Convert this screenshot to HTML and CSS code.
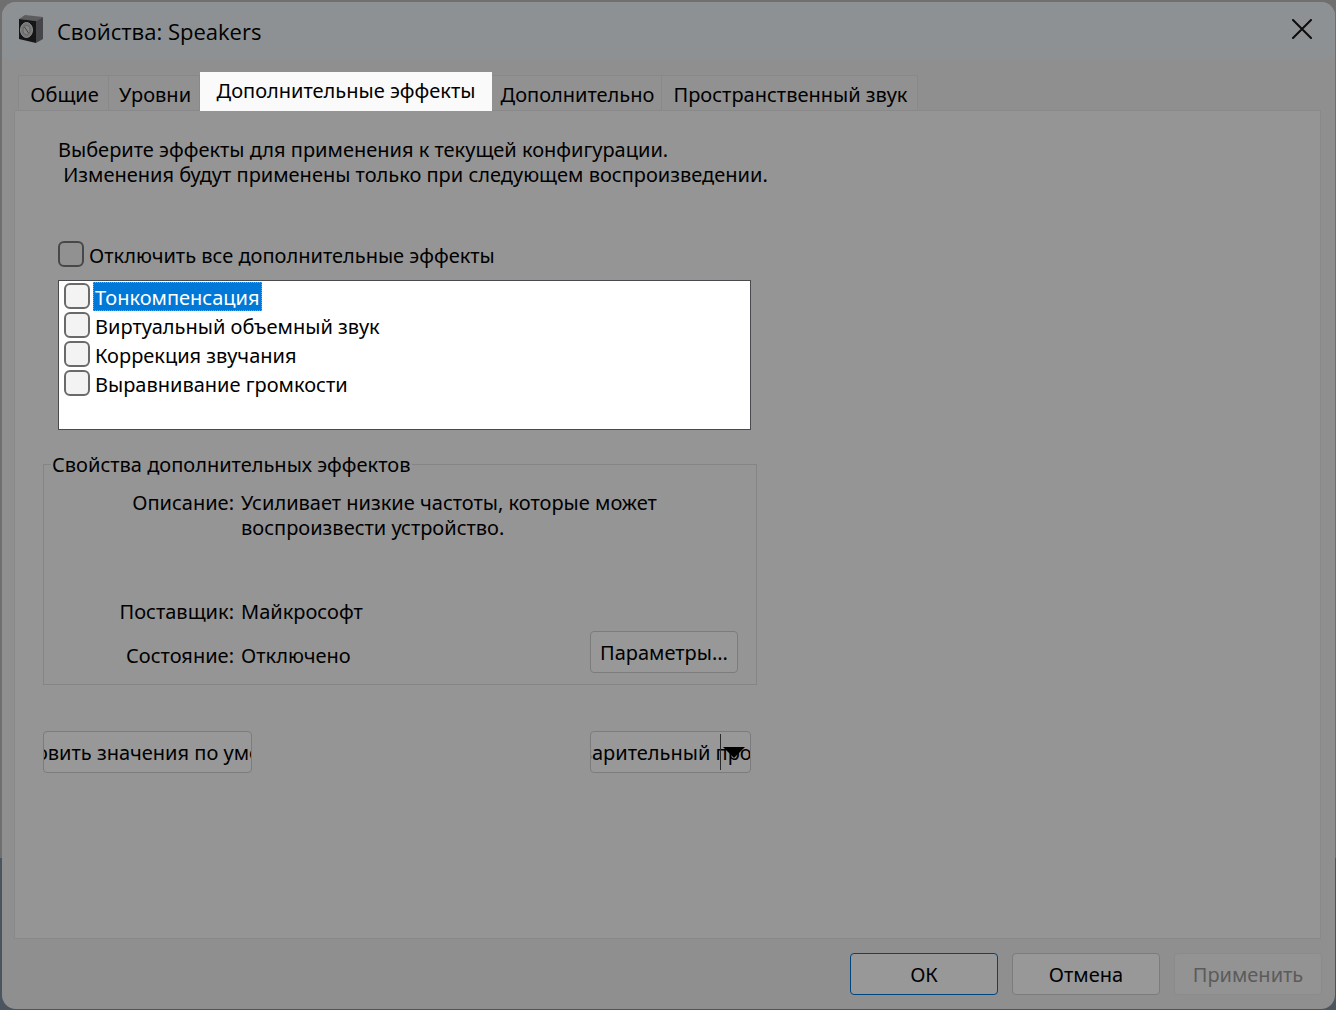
FILE: index.html
```html
<!DOCTYPE html>
<html lang="ru">
<head>
<meta charset="utf-8">
<title>Свойства: Speakers</title>
<link rel="stylesheet" href="styles.css">
</head>
<body>
<main class="dialog">
  <header class="titlebar">
    <svg class="speaker" viewBox="0 0 24 28" aria-hidden="true">
      <path d="M0 4 L6 0 L24 2 L17 6 Z" fill="#5c5c5e"/>
      <path d="M0 4 L17 6 V28 L0 24 Z" fill="#161616"/>
      <path d="M17 6 L24 2 V24 L17 28 Z" fill="#46464a"/>
      <ellipse cx="7.500" cy="15" rx="6" ry="7.500" fill="#777" stroke="#8c8c8c" stroke-width="1"/>
      <ellipse cx="7.500" cy="15" rx="3.500" ry="4.500" fill="#858585" stroke="#666" stroke-width="1"/>
      <path d="M5.500 12 L9.500 18" stroke="#444" stroke-width="1"/>
    </svg>
    <h1 class="title">Свойства: Speakers</h1>
    <button class="close" type="button" aria-label="Закрыть">
      <svg viewBox="0 0 20 20" aria-hidden="true"><path d="M1 1 L19 19 M19 1 L1 19" stroke="#0c0c0c" stroke-width="2" stroke-linecap="round"/></svg>
    </button>
  </header>

  <nav class="tabs" role="tablist">
    <button class="tab tab-short" type="button" role="tab">Общие</button>
    <button class="tab tab-short" type="button" role="tab">Уровни</button>
    <button class="tab tab-active" type="button" role="tab" aria-selected="true">Дополнительные эффекты</button>
    <button class="tab tab-medium" type="button" role="tab">Дополнительно</button>
    <button class="tab tab-long" type="button" role="tab">Пространственный звук</button>
  </nav>

  <section class="panel">
    <div class="content">
      <p class="intro">Выберите эффекты для применения к текущей конфигурации.<br>&nbsp;Изменения будут применены только при следующем воспроизведении.</p>

      <label class="check check-all"><input type="checkbox"><span>Отключить все дополнительные эффекты</span></label>

      <ul class="effects">
        <li><label class="check"><input type="checkbox"><span class="selected">Тонкомпенсация</span></label></li>
        <li><label class="check"><input type="checkbox"><span>Виртуальный объемный звук</span></label></li>
        <li><label class="check"><input type="checkbox"><span>Коррекция звучания</span></label></li>
        <li><label class="check"><input type="checkbox"><span>Выравнивание громкости</span></label></li>
      </ul>

      <fieldset class="group">
        <legend>Свойства дополнительных эффектов</legend>
        <dl class="details">
          <dt>Описание:</dt><dd class="description">Усиливает низкие частоты, которые может воспроизвести устройство.</dd>
          <dt>Поставщик:</dt><dd>Майкрософт</dd>
          <dt>Состояние:</dt><dd>Отключено</dd>
        </dl>
        <button class="button settings" type="button">Параметры...</button>
      </fieldset>

      <div class="actions">
        <button class="button restore" type="button">Восстановить значения по умолчанию</button>
        <button class="button preview" type="button">Предварительный просмотр
          <svg class="drop" viewBox="0 0 30 36" aria-hidden="true"><path d="M0 0 V36" stroke="#2b2b2b" stroke-width="2"/><path d="M3 13 H25 L14 24 Z" fill="#000"/></svg>
        </button>
      </div>
    </div>
  </section>

  <footer class="footer">
    <button class="button primary" type="button">ОК</button>
    <button class="button" type="button">Отмена</button>
    <button class="button" type="button" disabled>Применить</button>
  </footer>
</main>
</body>
</html>
```
FILE: styles.css
```css
* {
  box-sizing: border-box;
}

body {
  margin: 0;
  padding: 2px 1px 1px 2px;
  min-height: 100vh;
  display: flex;
  background: linear-gradient(#6f6f6f 85%, #4b555f 85%);
  color: #000;
  font: 20px/25px "Noto Sans", sans-serif;
}

button {
  font: inherit;
  color: inherit;
  padding: 0;
}

.dialog {
  flex: 1;
  display: flex;
  flex-direction: column;
  border-radius: 14px;
  background: #8f8f8f;
  overflow: hidden;
}

.titlebar {
  height: 57px;
  flex: none;
  display: flex;
  align-items: center;
  padding: 0 23px 4px 17px;
  background: #8d9193;
}

.speaker {
  width: 24px;
  height: 28px;
}

.title {
  flex: 1;
  margin: 4px 0 0 14px;
  font: 22px/30px "Open Sans", sans-serif;
}

.close {
  display: flex;
  border: 0;
  background: none;
}

.close svg {
  width: 20px;
  height: 20px;
}

.tabs {
  position: relative;
  z-index: 1;
  flex: none;
  display: flex;
  align-items: flex-end;
  height: 52px;
  padding-left: 16px;
}

.tab {
  height: 36px;
  flex: none;
  padding: 2px 0 0 2px;
  border: 1px solid #898989;
  border-left: 0;
  background: #919191;
  white-space: nowrap;
}

.tab:first-child {
  border-left: 1px solid #898989;
}

.tab-short {
  width: 91px;
}

.tab-active {
  width: 292px;
  height: 39px;
  padding: 0 0 2px;
  border: 0;
  background: #fafafa;
}

.tab-medium {
  width: 170px;
}

.tab-long {
  width: 256px;
}

.panel {
  flex: 1;
  margin: -1px 14px 0 12px;
  padding: 26px 28px;
  border: 1px solid #898989;
  background: #959595;
}

.content {
  max-width: 714px;
}

.intro {
  margin: 0 0 54px 15px;
  white-space: nowrap;
}

.check {
  display: flex;
  align-items: flex-start;
  gap: 3px;
}

.check input {
  appearance: none;
  flex: none;
  width: 26px;
  height: 26px;
  margin: 1px 0 0;
  border: 2px solid #6a6a6a;
  border-radius: 6px;
  background: #f3f3f3;
}

.check span {
  padding: 3px 2px 1px;
}

.check-all {
  align-items: center;
  height: 26px;
  margin-left: 15px;
}

.check-all input {
  margin: 0;
  border-color: #484848;
  background: #919191;
}

.effects {
  height: 150px;
  margin: 13px 6px 0 15px;
  padding: 1px 5px;
  border: 1px solid #4a4a4e;
  background: #fff;
  list-style: none;
}

.check .selected {
  background: #0078d7;
  color: #fff;
  outline: 1px dotted #d98b4a;
  outline-offset: -1px;
}

.group {
  position: relative;
  margin: 22px 0 0;
  padding: 13px 18px 16px;
  min-width: 0;
  border: 1px solid #858585;
}

.group legend {
  margin-left: -11px;
  padding: 0 1px;
}

.details {
  display: grid;
  grid-template-columns: 172px 430px;
  row-gap: 19px;
  column-gap: 7px;
  margin: 0;
}

.details dt {
  text-align: right;
}

.details dd {
  margin: 0;
}

.details .description {
  height: 90px;
}

.button {
  width: 148px;
  height: 42px;
  border: 1px solid #7c7c7c;
  border-radius: 4px;
  background: #989898;
  white-space: nowrap;
}

.settings {
  position: absolute;
  right: 18px;
  bottom: 11px;
}

.actions {
  display: flex;
  justify-content: space-between;
  margin: 46px 6px 0 0;
}

.restore,
.preview {
  position: relative;
  display: flex;
  align-items: center;
  justify-content: center;
  overflow: hidden;
}

.restore {
  width: 209px;
}

.preview {
  width: 161px;
}

.drop {
  position: absolute;
  right: 0;
  top: 2px;
  width: 30px;
  height: 36px;
}

.footer {
  flex: none;
  display: flex;
  justify-content: flex-end;
  gap: 14px;
  padding: 14px 13px;
}

.primary {
  border-color: #00457c;
}

.button:disabled {
  border-color: #8b8b8b;
  background: #939393;
  color: #5b5b5b;
}
```
